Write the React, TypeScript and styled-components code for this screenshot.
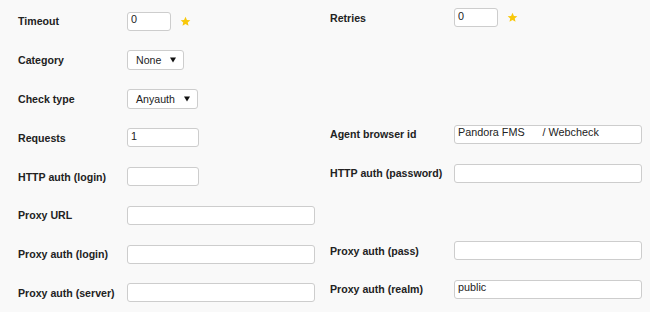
import React from "react";
import styled, { createGlobalStyle } from "styled-components";

const GlobalStyle = createGlobalStyle`
  html, body {
    margin: 0;
    padding: 0;
    background: #f9f9f9;
  }
  body {
    font-family: "Liberation Sans", Arial, sans-serif;
  }
`;

const Page = styled.div`
  width: 650px;
  height: 312px;
  overflow: hidden;
  background: #f9f9f9;
`;

const FormGrid = styled.div`
  display: grid;
  grid-template-columns: 109px 203px 124px 196px;
  grid-auto-rows: 38.8px;
  align-items: center;
  padding: 2px 0 0 18px;
`;

const Label = styled.div<{ $right?: boolean }>`
  font-size: 10.6px;
  font-weight: bold;
  color: #222;
  white-space: nowrap;
  padding-bottom: ${(p) => (p.$right ? "7px" : "0")};
`;

const Field = styled.div<{ $right?: boolean }>`
  display: flex;
  align-items: center;
  gap: 9px;
  padding-bottom: ${(p) => (p.$right ? "7px" : "0")};
`;

const TextInput = styled.input<{ $size?: "xs" | "sm" | "lg" }>`
  box-sizing: border-box;
  width: ${(p) => (p.$size === "xs" ? "44px" : p.$size === "sm" ? "72px" : "188px")};
  height: 19px;
  margin: 0;
  padding: 0 3px 4px;
  border: 1px solid #cdcdcd;
  border-radius: 3px;
  background: #fff;
  font-family: "Liberation Sans", Arial, sans-serif;
  font-size: 10.8px;
  color: #222;
  outline: none;
`;

const SelectBox = styled.div`
  box-sizing: border-box;
  display: inline-flex;
  align-items: center;
  gap: 9px;
  height: 20px;
  padding: 0 7px 0 8px;
  border: 1px solid #cdcdcd;
  border-radius: 3px;
  background: #fff;
  font-size: 10.6px;
  color: #222;
`;

const Star = () => (
  <svg width="11" height="11" viewBox="0 0 24 24" aria-hidden="true">
    <path
      d="M12 1.5l3.1 7 7.4.6-5.6 4.9 1.7 7.4L12 17.5l-6.6 3.9 1.7-7.4L1.5 9.1l7.4-.6z"
      fill="#f8c80a"
    />
  </svg>
);

const Caret = () => (
  <svg width="6" height="6" viewBox="0 0 6 6" aria-hidden="true">
    <path d="M0 0.5h6L3 5.5z" fill="#111" />
  </svg>
);

const Select = ({ value }: { value: string }) => (
  <SelectBox>
    <span>{value}</span>
    <Caret />
  </SelectBox>
);

const Blank = styled.div``;

export default function App() {
  return (
    <Page>
      <GlobalStyle />
      <FormGrid>
        <Label>Timeout</Label>
        <Field>
          <TextInput $size="xs" defaultValue="0" />
          <Star />
        </Field>
        <Label $right>Retries</Label>
        <Field $right>
          <TextInput $size="xs" defaultValue="0" />
          <Star />
        </Field>

        <Label>Category</Label>
        <Field>
          <Select value="None" />
        </Field>
        <Blank />
        <Blank />

        <Label>Check type</Label>
        <Field>
          <Select value="Anyauth" />
        </Field>
        <Blank />
        <Blank />

        <Label>Requests</Label>
        <Field>
          <TextInput $size="sm" defaultValue="1" />
        </Field>
        <Label $right>Agent browser id</Label>
        <Field $right>
          <TextInput defaultValue="Pandora FMS      / Webcheck" />
        </Field>

        <Label>HTTP auth (login)</Label>
        <Field>
          <TextInput $size="sm" />
        </Field>
        <Label $right>HTTP auth (password)</Label>
        <Field $right>
          <TextInput type="password" />
        </Field>

        <Label>Proxy URL</Label>
        <Field>
          <TextInput />
        </Field>
        <Blank />
        <Blank />

        <Label>Proxy auth (login)</Label>
        <Field>
          <TextInput />
        </Field>
        <Label $right>Proxy auth (pass)</Label>
        <Field $right>
          <TextInput type="password" />
        </Field>

        <Label>Proxy auth (server)</Label>
        <Field>
          <TextInput />
        </Field>
        <Label $right>Proxy auth (realm)</Label>
        <Field $right>
          <TextInput defaultValue="public" />
        </Field>
      </FormGrid>
    </Page>
  );
}
